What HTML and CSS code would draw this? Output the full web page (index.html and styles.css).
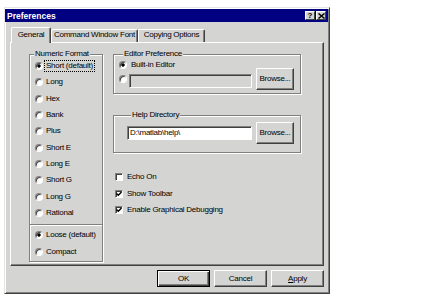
FILE: index.html
```html
<!DOCTYPE html>
<html lang="en">
<head>
<meta charset="UTF-8">
<title>Preferences</title>
<link rel="stylesheet" href="styles.css">
</head>
<body>
<div class="dialog">
  <div class="titlebar">
    <span class="caption">Preferences</span>
    <span class="tbtn">?</span>
    <span class="tbtn"><svg width="7" height="6" viewBox="0 0 7 6"><path d="M0.5 0.5 L6.5 5.5 M6.5 0.5 L0.5 5.5" stroke="#000" stroke-width="1.5"/></svg></span>
  </div>

  <div class="tabs">
    <div class="tab active tab-general">General</div>
    <div class="tab tab-font">Command Window Font</div>
    <div class="tab tab-copy">Copying Options</div>
  </div>

  <div class="panel">
    <fieldset class="group numeric">
      <legend>Numeric Format</legend>
      <div class="formats">
        <div class="opt"><span class="radio on"></span><span class="focus">Short (default)</span></div>
        <div class="opt"><span class="radio"></span>Long</div>
        <div class="opt"><span class="radio"></span>Hex</div>
        <div class="opt"><span class="radio"></span>Bank</div>
        <div class="opt"><span class="radio"></span>Plus</div>
        <div class="opt"><span class="radio"></span>Short E</div>
        <div class="opt"><span class="radio"></span>Long E</div>
        <div class="opt"><span class="radio"></span>Short G</div>
        <div class="opt"><span class="radio"></span>Long G</div>
        <div class="opt"><span class="radio"></span>Rational</div>
      </div>
      <div class="divider"></div>
      <div class="spacing">
        <div class="opt"><span class="radio on"></span>Loose (default)</div>
        <div class="opt"><span class="radio"></span>Compact</div>
      </div>
    </fieldset>

    <div class="side">
      <fieldset class="group editor">
        <legend>Editor Preference</legend>
        <div class="opt first"><span class="radio on"></span>Built-in Editor</div>
        <div class="pathrow">
          <span class="radio"></span>
          <span class="field off"></span>
          <span class="btn browse">Browse...</span>
        </div>
      </fieldset>

      <fieldset class="group help">
        <legend>Help Directory</legend>
        <div class="pathrow">
          <span class="field">D:\matlab\help\</span>
          <span class="btn browse">Browse...</span>
        </div>
      </fieldset>

      <div class="checks">
        <div class="opt"><span class="check"></span>Echo On</div>
        <div class="opt"><span class="check"><svg width="6" height="6" viewBox="0 0 6 6"><path d="M0.5 2.5 L2.3 4.3 L5.5 1" fill="none" stroke="#000" stroke-width="1.4"/></svg></span>Show Toolbar</div>
        <div class="opt"><span class="check"><svg width="6" height="6" viewBox="0 0 6 6"><path d="M0.5 2.5 L2.3 4.3 L5.5 1" fill="none" stroke="#000" stroke-width="1.4"/></svg></span>Enable Graphical Debugging</div>
      </div>
    </div>
  </div>

  <div class="actions">
    <span class="btn default">OK</span>
    <span class="btn">Cancel</span>
    <span class="btn"><u>A</u>pply</span>
  </div>
</div>
</body>
</html>
```

FILE: styles.css
```css
body { margin: 0; background: #fff; font: 8px/10px "Liberation Sans", Arial, sans-serif; letter-spacing: -0.25px; color: #000; }

.dialog { box-sizing: border-box; width: 326px; height: 287px; margin: 7px 0 0 4px; padding: 1px 1px 0 0; background: #d4d4d2; border: 1px solid; border-color: #e6e6e4 #404040 #404040 #e6e6e4; box-shadow: inset 1px 1px #fff, inset -1px -1px #808080; }

.titlebar { display: flex; align-items: center; height: 13px; padding: 0 2px; background: #000080; }
.caption { flex: 1; color: #fff; font-weight: bold; font-size: 8.5px; letter-spacing: 0; }
.tbtn { box-sizing: border-box; display: flex; align-items: center; justify-content: center; width: 10px; height: 9px; margin-left: 1px; background: #d4d4d2; border: 1px solid; border-color: #fff #404040 #404040 #fff; font-weight: bold; font-size: 8px; letter-spacing: 0; }

.tabs { display: flex; align-items: flex-end; height: 15px; margin-top: 5px; padding-left: 6px; }
.tab { box-sizing: border-box; height: 13px; background: #d4d4d2; border: 1px solid #fff; border-right-color: #404040; border-bottom: 0; border-radius: 2px 2px 0 0; box-shadow: inset -1px 0 #808080; text-align: center; white-space: nowrap; }
.tab.active { height: 16px; margin-bottom: -1px; padding-top: 2px; position: relative; z-index: 1; }
.tab-general { width: 40px; }
.tab-font { width: 87px; }
.tab-copy { width: 67px; }

.panel { box-sizing: border-box; display: flex; align-items: flex-start; width: 314px; height: 224px; margin-left: 5px; padding: 6px 0 0 18px; border: 1px solid; border-color: #fff #404040 #404040 #fff; box-shadow: inset -1px -1px #808080; }

.group { box-sizing: border-box; min-width: 0; margin: 0; padding: 0; border: 1px solid #808080; box-shadow: inset 1px 1px #fff, 1px 1px #fff; }
.group legend { margin-left: 4px; padding: 0 1px; background: #d4d4d2; line-height: 10px; }

.opt { display: flex; align-items: center; height: 16.33px; white-space: nowrap; }

.numeric { width: 74px; padding-bottom: 1px; }
.numeric .radio { margin: 0 3px 0 5px; }
.formats { margin-top: -1px; }
.spacing .opt { height: 17px; }
.divider { height: 0; margin-top: 3px; border-top: 1px solid #808080; border-bottom: 1px solid #fff; }
.focus { margin-left: -1px; padding: 0 1px; outline: 1px dotted #000; }

.radio { box-sizing: border-box; flex: none; width: 8px; height: 8px; border-radius: 50%; background: #fff; border: 1px solid; border-color: #808080 #fff #fff #808080; box-shadow: inset 1px 1px #404040; }
.radio.on { background: radial-gradient(circle, #000 1.4px, #fff 1.9px); }

.side { width: 188px; margin-left: 10px; }

.editor { padding: 0 6px 3px 5px; }
.editor .first { height: 12px; }
.editor .first .radio { margin-right: 4px; }
.editor .pathrow { margin-top: -3px; }
.editor .pathrow .radio { margin-right: 2px; }

.help { margin-top: 16px; padding: 0 6px 8px 13px; }
.help .pathrow { margin-top: 2px; }

.pathrow { display: flex; align-items: center; height: 22px; }
.field { box-sizing: border-box; flex: 1; height: 14px; padding-left: 2px; background: #fff; border: 1px solid; border-color: #808080 #fff #fff #808080; box-shadow: inset 1px 1px #404040; line-height: 12px; white-space: nowrap; }
.field.off { margin-top: 3px; background: #d4d4d2; }

.btn { box-sizing: border-box; display: flex; align-items: center; justify-content: center; background: #d4d4d2; border: 1px solid; border-color: #fff #404040 #404040 #fff; box-shadow: inset -1px -1px #808080; white-space: nowrap; }
.btn.default { border-color: #000; box-shadow: inset 1px 1px #fff, inset -1px -1px #404040, inset -2px -2px #808080; }
.browse { flex: none; width: 38px; height: 22px; margin-left: 4px; }

.checks { margin-top: 16px; }
.checks .opt { height: 16.5px; }
.check { box-sizing: border-box; flex: none; width: 8px; height: 8px; margin: 0 4px 0 2px; background: #fff; border: 1px solid; border-color: #808080 #fff #fff #808080; box-shadow: inset 1px 1px #404040; }
.check svg { display: block; }

.actions { display: flex; justify-content: flex-end; gap: 4px; width: 314px; margin: 4px 0 0 5px; }
.actions .btn { width: 53px; height: 17px; }
```
